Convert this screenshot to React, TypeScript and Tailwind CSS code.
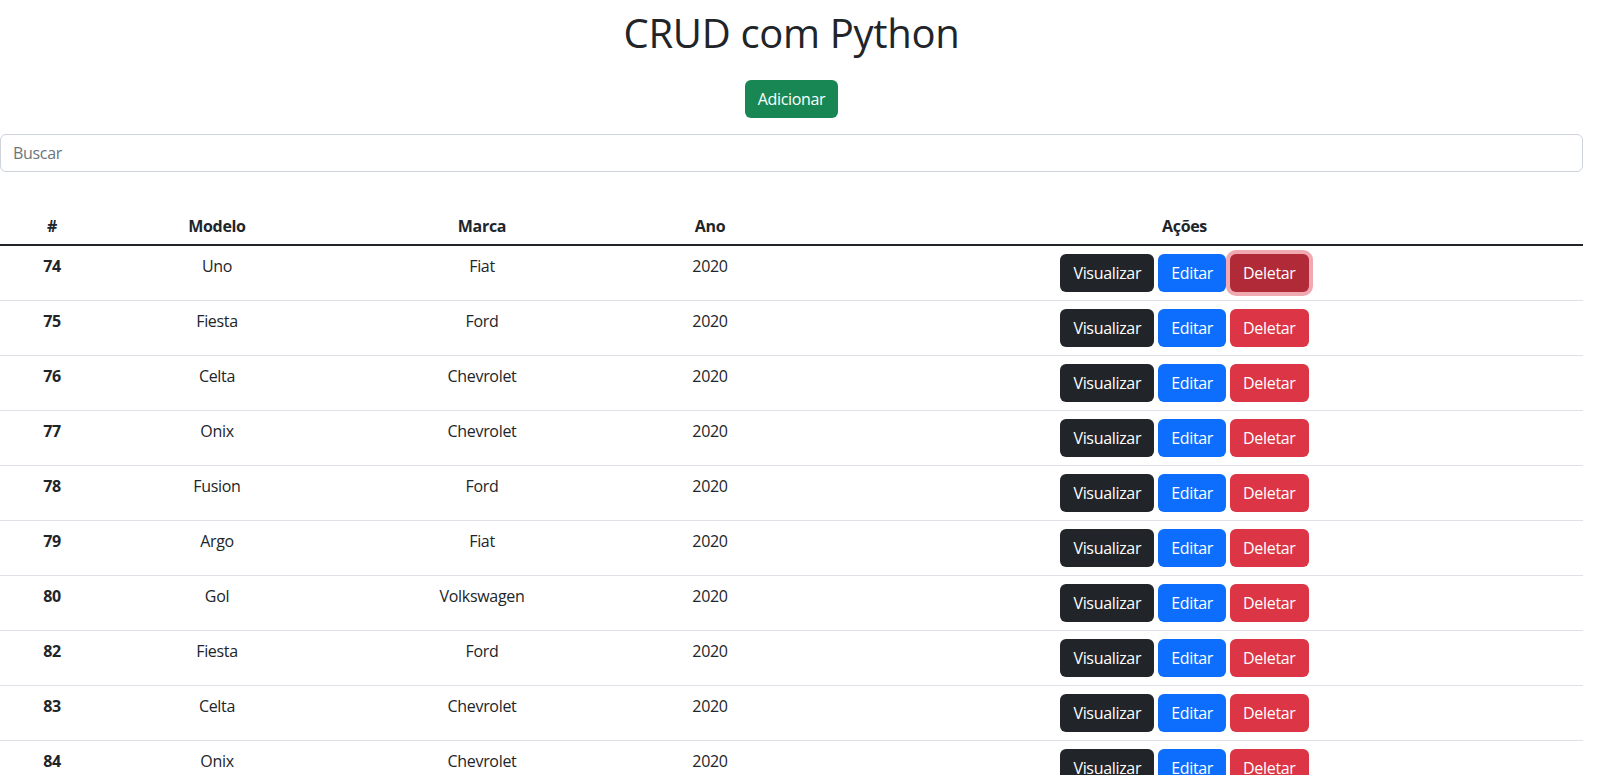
import React from 'react';

type Car = { id: number; modelo: string; marca: string; ano: number };

const CARS: Car[] = [
    { id: 74, modelo: 'Uno', marca: 'Fiat', ano: 2020 },
    { id: 75, modelo: 'Fiesta', marca: 'Ford', ano: 2020 },
    { id: 76, modelo: 'Celta', marca: 'Chevrolet', ano: 2020 },
    { id: 77, modelo: 'Onix', marca: 'Chevrolet', ano: 2020 },
    { id: 78, modelo: 'Fusion', marca: 'Ford', ano: 2020 },
    { id: 79, modelo: 'Argo', marca: 'Fiat', ano: 2020 },
    { id: 80, modelo: 'Gol', marca: 'Volkswagen', ano: 2020 },
    { id: 82, modelo: 'Fiesta', marca: 'Ford', ano: 2020 },
    { id: 83, modelo: 'Celta', marca: 'Chevrolet', ano: 2020 },
    { id: 84, modelo: 'Onix', marca: 'Chevrolet', ano: 2020 },
];

const btn = 'h-[38px] px-3 rounded-[6px] text-white text-base leading-6 border border-transparent';

export default function App() {
    return (
        <div className="w-[1583px] min-h-screen bg-white text-[#212529] tracking-[-0.02em] font-['Open_Sans','Noto_Sans',sans-serif]">
            {/* Header */}
            <h1 className="pt-[9px] text-center text-[40px] leading-[48px] font-normal">CRUD com Python</h1>

            <div className="flex justify-center mt-[23px]">
                <button className={`${btn} bg-[#198754]`}>Adicionar</button>
            </div>

            {/* Search */}
            <input
                type="text"
                placeholder="Buscar"
                className="mt-[16px] block w-full h-[38px] px-3 text-base border border-[#ced4da] rounded-[6px] placeholder:text-[#6c757d] outline-none"
            />

            {/* Table */}
            <table className="mt-[33px] w-full table-fixed border-collapse">
                <thead>
                    <tr className="border-b-2 border-[#212529]">
                        <th className="w-[104px] px-2 pt-[9px] pb-[6px] font-bold leading-6">#</th>
                        <th className="w-[226px] px-2 pt-[9px] pb-[6px] font-bold leading-6">Modelo</th>
                        <th className="w-[304px] px-2 pt-[9px] pb-[6px] font-bold leading-6">Marca</th>
                        <th className="w-[152px] px-2 pt-[9px] pb-[6px] font-bold leading-6">Ano</th>
                        <th className="px-2 pt-[9px] pb-[6px] font-bold leading-6">Ações</th>
                    </tr>
                </thead>
                <tbody>
                    {CARS.map((car, idx) => (
                        <tr key={car.id} className="border-b border-[#dee2e6]">
                            <th className="p-2 align-top font-bold leading-6">{car.id}</th>
                            <td className="p-2 align-top text-center leading-6">{car.modelo}</td>
                            <td className="p-2 align-top text-center leading-6">{car.marca}</td>
                            <td className="p-2 align-top text-center leading-6">{car.ano}</td>
                            <td className="p-2 align-top">
                                <div className="flex justify-center gap-1">
                                    <button className={`${btn} bg-[#212529]`}>Visualizar</button>
                                    <button className={`${btn} bg-[#0d6efd]`}>Editar</button>
                                    {idx === 0 ? (
                                        <button className={`${btn} bg-[#b02a37] ring-4 ring-[#e15361]/50`}>Deletar</button>
                                    ) : (
                                        <button className={`${btn} bg-[#dc3545]`}>Deletar</button>
                                    )}
                                </div>
                            </td>
                        </tr>
                    ))}
                </tbody>
            </table>
        </div>
    );
}
